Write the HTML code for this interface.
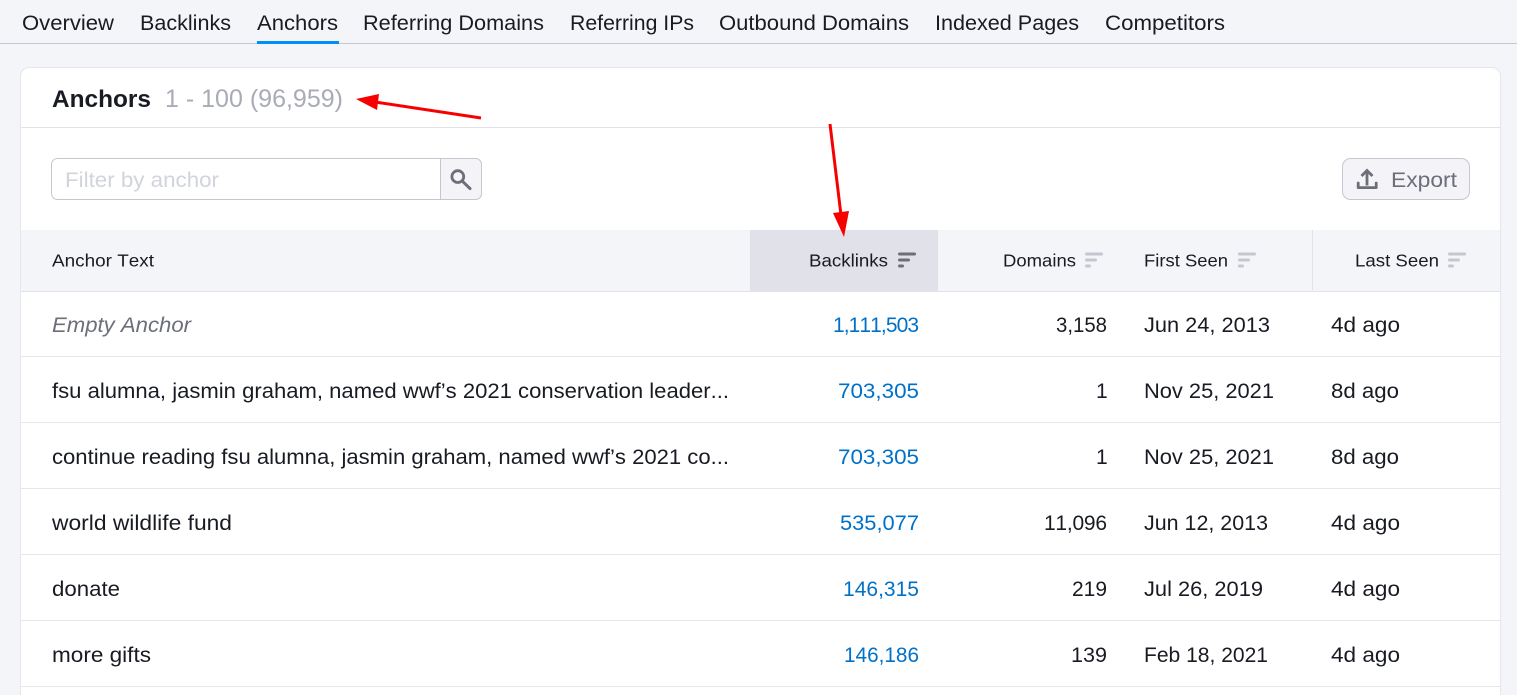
<!DOCTYPE html>
<html><head><meta charset="utf-8"><style>
html,body{margin:0;padding:0;width:1517px;height:695px;overflow:hidden;background:#f4f5f9}
svg{display:block;font-family:"Liberation Sans",sans-serif}
text{fill:#191b23;font-kerning:none}
.n{font-size:21px}.r{font-size:21px}.h{font-size:17.5px}
</style></head><body>
<svg width="1517" height="695" viewBox="0 0 1517 695" xmlns="http://www.w3.org/2000/svg">
<rect x="0" y="43" width="1517" height="1" fill="#c4c7cf"/>
<rect x="257" y="41" width="82" height="3" fill="#008ff8"/>
<text class="n" x="22" y="30" textLength="92" lengthAdjust="spacingAndGlyphs">Overview</text>
<text class="n" x="140" y="30" textLength="91" lengthAdjust="spacingAndGlyphs">Backlinks</text>
<text class="n" x="257" y="30" textLength="81" lengthAdjust="spacingAndGlyphs">Anchors</text>
<text class="n" x="363" y="30" textLength="181" lengthAdjust="spacingAndGlyphs">Referring Domains</text>
<text class="n" x="570" y="30" textLength="124" lengthAdjust="spacingAndGlyphs">Referring IPs</text>
<text class="n" x="719" y="30" textLength="190" lengthAdjust="spacingAndGlyphs">Outbound Domains</text>
<text class="n" x="935" y="30" textLength="144" lengthAdjust="spacingAndGlyphs">Indexed Pages</text>
<text class="n" x="1105" y="30" textLength="120" lengthAdjust="spacingAndGlyphs">Competitors</text>

<rect x="20" y="67" width="1481" height="660" rx="9" fill="#e6e7ee"/>
<rect x="21" y="68" width="1479" height="660" rx="8" fill="#fff"/>
<text x="52" y="107" font-size="24.5" font-weight="700" textLength="99" lengthAdjust="spacingAndGlyphs">Anchors</text>
<text x="165" y="107" font-size="25" style="fill:#a9abb6" textLength="178" lengthAdjust="spacingAndGlyphs">1 - 100 (96,959)</text>
<rect x="21" y="127" width="1479" height="1" fill="#e0e1e9"/>

<rect x="51.5" y="158.5" width="430" height="41" rx="6" fill="#fff" stroke="#c4c7cf"/>
<path d="M440.5 158.5H475.5a6 6 0 0 1 6 6v29a6 6 0 0 1-6 6H440.5z" fill="#f4f4f8" stroke="#c4c7cf"/>
<text x="65" y="187" font-size="21" style="fill:#d1d4db" textLength="154" lengthAdjust="spacingAndGlyphs">Filter by anchor</text>
<circle cx="457.8" cy="176.6" r="5.9" fill="none" stroke="#6c6e79" stroke-width="2.8"/>
<path d="M462.5 181.3L470 188.6" fill="none" stroke="#6c6e79" stroke-width="3" stroke-linecap="round"/>

<rect x="1342.5" y="158.5" width="127" height="41" rx="8" fill="#f4f4f8" stroke="#c4c7cf"/>
<path d="M1367 185.5V171" fill="none" stroke="#6c6e79" stroke-width="2.8"/>
<path d="M1361.5 176L1367 170.5L1372.5 176" fill="none" stroke="#6c6e79" stroke-width="2.8"/>
<path d="M1358.2 183V187.6H1376.2V183" fill="none" stroke="#6c6e79" stroke-width="2.8" stroke-linecap="round" stroke-linejoin="round"/>
<text x="1391" y="187" font-size="21" style="fill:#6c6e79" textLength="66" lengthAdjust="spacingAndGlyphs">Export</text>

<rect x="21" y="230" width="1479" height="61" fill="#f4f5f9"/>
<rect x="750" y="230" width="188" height="61" fill="#e0e1e9"/>
<rect x="1312" y="230" width="1" height="60" fill="#e0e1e9"/>
<rect x="21" y="291" width="1479" height="1" fill="#e0e1e9"/>
<text class="h" x="52" y="266.5" textLength="102" lengthAdjust="spacingAndGlyphs">Anchor Text</text>
<text class="h" x="809" y="266.5" textLength="79" lengthAdjust="spacingAndGlyphs">Backlinks</text>
<text class="h" x="1003" y="266.5" textLength="73" lengthAdjust="spacingAndGlyphs">Domains</text>
<text class="h" x="1144" y="266.5" textLength="84" lengthAdjust="spacingAndGlyphs">First Seen</text>
<text class="h" x="1355" y="266.5" textLength="84" lengthAdjust="spacingAndGlyphs">Last Seen</text>
<g fill="#6c6e79">
<rect x="898" y="252.5" width="18" height="3" rx="1.5"/><rect x="898" y="258.5" width="12" height="3" rx="1.5"/><rect x="898" y="264.5" width="6" height="3" rx="1.5"/>
</g>
<g fill="#c4c7cf">
<rect x="1085" y="252.5" width="18" height="3" rx="1.5"/><rect x="1085" y="258.5" width="12" height="3" rx="1.5"/><rect x="1085" y="264.5" width="6" height="3" rx="1.5"/>
<rect x="1238" y="252.5" width="18" height="3" rx="1.5"/><rect x="1238" y="258.5" width="12" height="3" rx="1.5"/><rect x="1238" y="264.5" width="6" height="3" rx="1.5"/>
<rect x="1448" y="252.5" width="18" height="3" rx="1.5"/><rect x="1448" y="258.5" width="12" height="3" rx="1.5"/><rect x="1448" y="264.5" width="6" height="3" rx="1.5"/>
</g>

<g fill="#e6e7ee">
<rect x="21" y="356" width="1479" height="1"/><rect x="21" y="422" width="1479" height="1"/><rect x="21" y="488" width="1479" height="1"/><rect x="21" y="554" width="1479" height="1"/><rect x="21" y="620" width="1479" height="1"/><rect x="21" y="686" width="1479" height="1"/>
</g>

<text class="r" x="52" y="332" font-style="italic" style="fill:#6c6e79" textLength="139" lengthAdjust="spacingAndGlyphs">Empty Anchor</text>
<text class="r" x="833" y="332" style="fill:#0071c9" textLength="86" lengthAdjust="spacing">1,111,503</text>
<text class="r" x="1056" y="332" textLength="51" lengthAdjust="spacingAndGlyphs">3,158</text>
<text class="r" x="1144" y="332" textLength="126" lengthAdjust="spacingAndGlyphs">Jun 24, 2013</text>
<text class="r" x="1331" y="332" textLength="69" lengthAdjust="spacingAndGlyphs">4d ago</text>

<text class="r" x="52" y="398" textLength="677" lengthAdjust="spacingAndGlyphs">fsu alumna, jasmin graham, named wwf’s 2021 conservation leader...</text>
<text class="r" x="838" y="398" style="fill:#0071c9" textLength="81" lengthAdjust="spacingAndGlyphs">703,305</text>
<text class="r" x="1096" y="398">1</text>
<text class="r" x="1144" y="398" textLength="130" lengthAdjust="spacingAndGlyphs">Nov 25, 2021</text>
<text class="r" x="1331" y="398" textLength="68" lengthAdjust="spacingAndGlyphs">8d ago</text>

<text class="r" x="52" y="464" textLength="677" lengthAdjust="spacingAndGlyphs">continue reading fsu alumna, jasmin graham, named wwf’s 2021 co...</text>
<text class="r" x="838" y="464" style="fill:#0071c9" textLength="81" lengthAdjust="spacingAndGlyphs">703,305</text>
<text class="r" x="1096" y="464">1</text>
<text class="r" x="1144" y="464" textLength="130" lengthAdjust="spacingAndGlyphs">Nov 25, 2021</text>
<text class="r" x="1331" y="464" textLength="68" lengthAdjust="spacingAndGlyphs">8d ago</text>

<text class="r" x="52" y="530" textLength="180" lengthAdjust="spacingAndGlyphs">world wildlife fund</text>
<text class="r" x="840" y="530" style="fill:#0071c9" textLength="79" lengthAdjust="spacingAndGlyphs">535,077</text>
<text class="r" x="1044" y="530" textLength="63" lengthAdjust="spacing">11,096</text>
<text class="r" x="1144" y="530" textLength="124" lengthAdjust="spacingAndGlyphs">Jun 12, 2013</text>
<text class="r" x="1331" y="530" textLength="69" lengthAdjust="spacingAndGlyphs">4d ago</text>

<text class="r" x="52" y="596" textLength="68" lengthAdjust="spacingAndGlyphs">donate</text>
<text class="r" x="843" y="596" style="fill:#0071c9" textLength="76" lengthAdjust="spacingAndGlyphs">146,315</text>
<text class="r" x="1072" y="596" textLength="35" lengthAdjust="spacingAndGlyphs">219</text>
<text class="r" x="1144" y="596" textLength="119" lengthAdjust="spacingAndGlyphs">Jul 26, 2019</text>
<text class="r" x="1331" y="596" textLength="69" lengthAdjust="spacingAndGlyphs">4d ago</text>

<text class="r" x="52" y="662" textLength="99" lengthAdjust="spacingAndGlyphs">more gifts</text>
<text class="r" x="844" y="662" style="fill:#0071c9" textLength="75" lengthAdjust="spacingAndGlyphs">146,186</text>
<text class="r" x="1071" y="662" textLength="36" lengthAdjust="spacingAndGlyphs">139</text>
<text class="r" x="1144" y="662" textLength="124" lengthAdjust="spacingAndGlyphs">Feb 18, 2021</text>
<text class="r" x="1331" y="662" textLength="69" lengthAdjust="spacingAndGlyphs">4d ago</text>

<path d="M481 118L375 102" stroke="#f80000" stroke-width="3" fill="none"/>
<path d="M356 99L379 94L377 110z" fill="#f80000"/>
<path d="M830 124L841 215" stroke="#f80000" stroke-width="3" fill="none"/>
<path d="M844 237L833 213L849 211z" fill="#f80000"/>
</svg>
</body></html>
